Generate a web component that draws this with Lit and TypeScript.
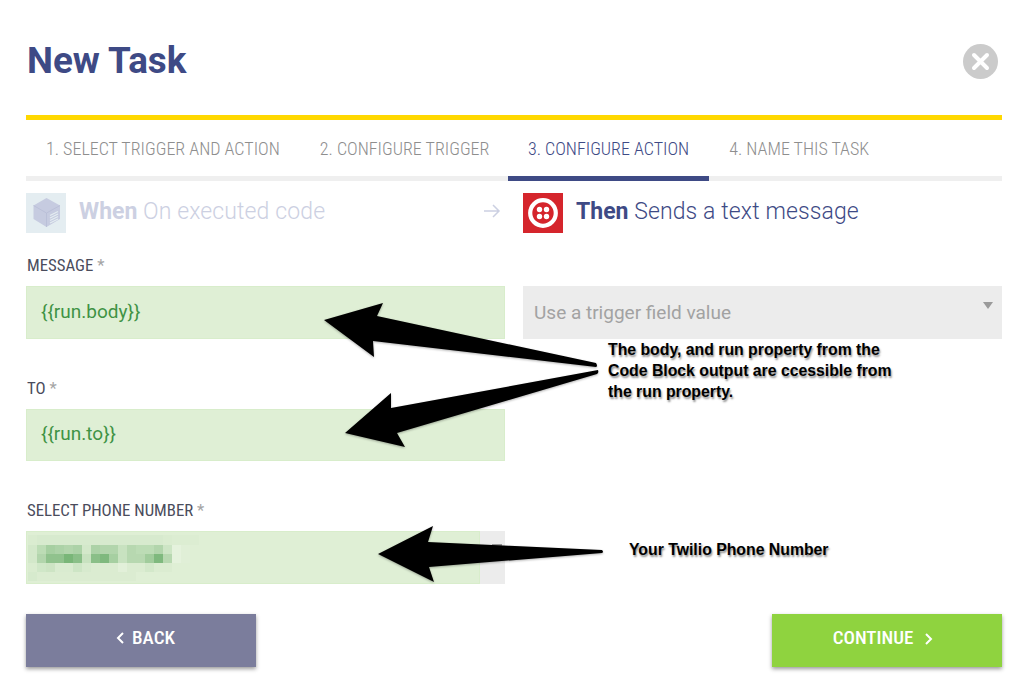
import { LitElement, html, css, svg } from "lit";
import { customElement } from "lit/decorators.js";

const CELLS: number[][] = [
  [.04,.06,.06,.06,.06,.06,.06,.06,.06,.06,.06,.06,.06,.06,.06,.04,.02,.02,.02],
  [.1,.3,.5,.45,.4,.45,.1,.45,.4,.4,.2,.35,.3,.3,.4,.15,-.2,-.05,0],
  [.1,.4,.7,.7,.9,.75,.2,.75,.85,.5,.2,.35,.35,.55,.85,.35,-.2,-.05,0],
  [.04,.12,.16,.05,.05,.15,.06,.03,.03,.03,-.1,.03,.03,.1,.03,.03,0,0,0],
  [.08,.03,.03,.03,.03,.03,.03,.03,.03,.03,.03,.03,0,0,0,0,0,0,0],
];

const cell = (a: number) =>
  a < 0 ? `rgba(255,255,255,${-a})` : `rgba(110,175,110,${a})`;

@customElement("app-root")
export class AppRoot extends LitElement {
  static styles = css`
    :host { display: block; position: relative; width: 1024px; height: 692px; background: #fff; overflow: hidden; font-family: Roboto, sans-serif; }
    .page { display: flex; flex-direction: column; padding: 0 22px 0 26px; }
    .head { display: flex; justify-content: space-between; align-items: center; height: 115px; }
    h1 { margin: 7px 0 0 1px; font: 700 36.8px/40px Roboto, sans-serif; color: #3e4a85; }
    .close { width: 35px; height: 35px; margin: 8px 4px 0 0; display: block; }
    .tabs { display: flex; border-top: 5px solid #ffd800; border-bottom: 5px solid #efefef; height: 66px; box-sizing: border-box; }
    .tab { position: relative; box-sizing: border-box; padding: 2px 20px 0; display: flex; align-items: center; height: 56px; font: 300 18px/1 "Roboto Condensed", "Liberation Sans Narrow", Roboto, sans-serif; color: #8e8e8e; white-space: nowrap; }
    .tab.on { color: #3e4a85; margin-left: -1.5px; }
    .tab.on::after { content: ""; position: absolute; left: 0; right: 0; bottom: -5px; height: 5px; background: #3e4a85; }
    .flow { display: grid; grid-template-columns: 479px 479px; column-gap: 18px; margin-top: 12px; height: 40px; }
    .step { display: flex; align-items: center; gap: 13px; font-size: 23px; font-weight: 300; color: #3e4a85; }
    .step span { padding-bottom: 4px; letter-spacing: .12px; }
    .step b { font-weight: 700; letter-spacing: 0; }
    .step.off { color: #ccd0e2; position: relative; }
    .step .ic { width: 40px; height: 40px; display: block; flex: none; }
    .step .go { position: absolute; right: 4px; top: 9px; width: 18px; height: 18px; }
    .form { display: grid; grid-template-columns: 479px 479px; column-gap: 18px; margin-top: 22px; }
    .field { display: flex; flex-direction: column; }
    label { font: 400 16.8px/20px "Roboto Condensed", "Liberation Sans Narrow", Roboto, sans-serif; color: #4a4c5c; height: 31px; padding-left: 1px; }
    label i { font-style: normal; color: #a5a5a5; }
    .input { height: 52.67px; box-sizing: border-box; background: #dfefd5; border: 1px solid #d8edcb; color: #3f9345; font-size: 19px; padding: 0 14px 2px; display: flex; align-items: center; }
    .spacer { height: 39px; }
    .sel { height: 52.67px; box-sizing: border-box; margin-top: 31px; background: #ececec; color: #a2a2a2; font-size: 19px; padding: 0 11px; display: flex; align-items: center; position: relative; }
    .caret { position: absolute; right: 9px; top: 16px; width: 0; height: 0; border: 5px solid transparent; border-top: 7px solid #9a9a9a; border-bottom: 0; }
    .phone { position: relative; height: 52.67px; background: #ececec; }
    .phone .dash { position: absolute; right: 3px; top: 13px; width: 10px; height: 2px; background: #999; }
    .phone .green { position: absolute; inset: 0 25px 0 0; background: #dfefd5; border: 1px solid #d8edcb; box-sizing: border-box; }
    .mosaic { position: absolute; left: 1px; top: 3px; display: grid; grid-template-columns: repeat(19, 9px); grid-auto-rows: 9.2px; filter: blur(.7px); }
    .actions { display: flex; justify-content: space-between; margin-top: 30px; }
    .btn { width: 230px; height: 52.67px; box-sizing: border-box; padding-bottom: 5px; display: flex; align-items: center; justify-content: center; color: #fff; font: 500 19px/1 "Roboto Condensed", "Liberation Sans Narrow", Roboto, sans-serif; box-shadow: 0 2px 4px rgba(0,0,0,.4); }
    .btn svg { width: 10px; height: 14px; display: block; }
    .back { background: #7b7d9c; gap: 6px; padding-left: 9px; }
    .next { background: #8fd33f; gap: 10px; padding-right: 8px; }
    .next svg { margin-top: 3px; }
    .arrows { position: absolute; inset: 0; width: 1024px; height: 692px; pointer-events: none; filter: drop-shadow(0 1px 1px rgba(0,0,0,.3)); }
    .note { position: absolute; margin: 0; font: 700 15.8px/21px "Liberation Sans", Arial, sans-serif; color: #000; text-shadow: 1px 2px 2px rgba(0,0,0,.45); white-space: nowrap; }
    .n1 { left: 608px; top: 339px; }
    .n2 { left: 629px; top: 539px; }
  `;

  render() {
    const chev = (d: string) => svg`<svg viewBox="0 0 10 14"><path d=${d} fill="none" stroke="#fff" stroke-width="2"/></svg>`;
    return html`
      <div class="page">
        <div class="head">
          <h1>New Task</h1>
          <svg class="close" viewBox="0 0 35 35"><circle cx="17.5" cy="17.5" r="17.5" fill="#cbcbcb"/><path d="M11 11l13 13M24 11L11 24" stroke="#fff" stroke-width="4" stroke-linecap="round"/></svg>
        </div>
        <div class="tabs">
          <div class="tab">1. SELECT TRIGGER AND ACTION</div>
          <div class="tab">2. CONFIGURE TRIGGER</div>
          <div class="tab on">3. CONFIGURE ACTION</div>
          <div class="tab">4. NAME THIS TASK</div>
        </div>
        <div class="flow">
          <div class="step off">
            <svg class="ic" viewBox="0 0 40 40"><rect width="40" height="40" fill="#e4edf1"/><path d="M20.500 5l13.500 7.500V26l-13.500 8-13-8V12.500z" fill="#c6cbe0"/><path d="M7.500 12.500l13 7.500 13.500-7.500" fill="none" stroke="#b7bdd6" stroke-width=".8"/><path d="M20.500 20v14" stroke="#b7bdd6" stroke-width=".8"/><path d="M24 22.500l8-4M24 25l8-4M24 27.500l8-4M24 30l8-4" stroke="#e4edf1" stroke-width="1.300"/></svg>
            <span><b>When</b> On executed code</span>
            <svg class="go" viewBox="0 0 18 18"><path d="M1 9h15M10 3l6 6-6 6" fill="none" stroke="#ccd0e2" stroke-width="1.500"/></svg>
          </div>
          <div class="step">
            <svg class="ic" viewBox="0 0 40 40"><rect width="40" height="40" fill="#d5252c"/><circle cx="20" cy="20" r="12.800" fill="none" stroke="#fff" stroke-width="4.200"/><circle cx="16.500" cy="16.500" r="2.700" fill="#fff"/><circle cx="23.500" cy="16.500" r="2.700" fill="#fff"/><circle cx="16.500" cy="23.500" r="2.700" fill="#fff"/><circle cx="23.500" cy="23.500" r="2.700" fill="#fff"/></svg>
            <span><b>Then</b> Sends a text message</span>
          </div>
        </div>
        <div class="form">
          <div class="field">
            <label>MESSAGE <i>*</i></label>
            <div class="input">{{run.body}}</div>
            <div class="spacer"></div>
            <label>TO <i>*</i></label>
            <div class="input">{{run.to}}</div>
            <div class="spacer"></div>
            <label>SELECT PHONE NUMBER <i>*</i></label>
            <div class="phone">
              <div class="dash"></div>
              <div class="green">
                <div class="mosaic">
                  ${CELLS.flat().map((a) => html`<span style="background:${cell(a)}"></span>`)}
                </div>
              </div>
            </div>
          </div>
          <div class="field">
            <div class="sel">Use a trigger field value<span class="caret"></span></div>
          </div>
        </div>
        <div class="actions">
          <div class="btn back">${chev("M7 2L2 7l5 5")}<span>BACK</span></div>
          <div class="btn next"><span>CONTINUE</span>${chev("M3 2l5 5-5 5")}</div>
        </div>
      </div>
      <svg class="arrows" viewBox="0 0 1024 692">
        <path d="M324 320L383 303L377 316L596 363Q598 366 596 367L373 341L374 357Z" fill="#000"/>
        <path d="M598 370Q599 373 597 374L397 433L405 447L345 433L391 393L391 408Z" fill="#000"/>
        <path d="M378 554L433 526L428 542L602 550Q604 552 602 553L429 567L434 582Z" fill="#000"/>
      </svg>
      <p class="note n1">The body, and run property from the<br />Code Block output are ccessible from<br />the run property.</p>
      <p class="note n2">Your Twilio Phone Number</p>
    `;
  }
}
